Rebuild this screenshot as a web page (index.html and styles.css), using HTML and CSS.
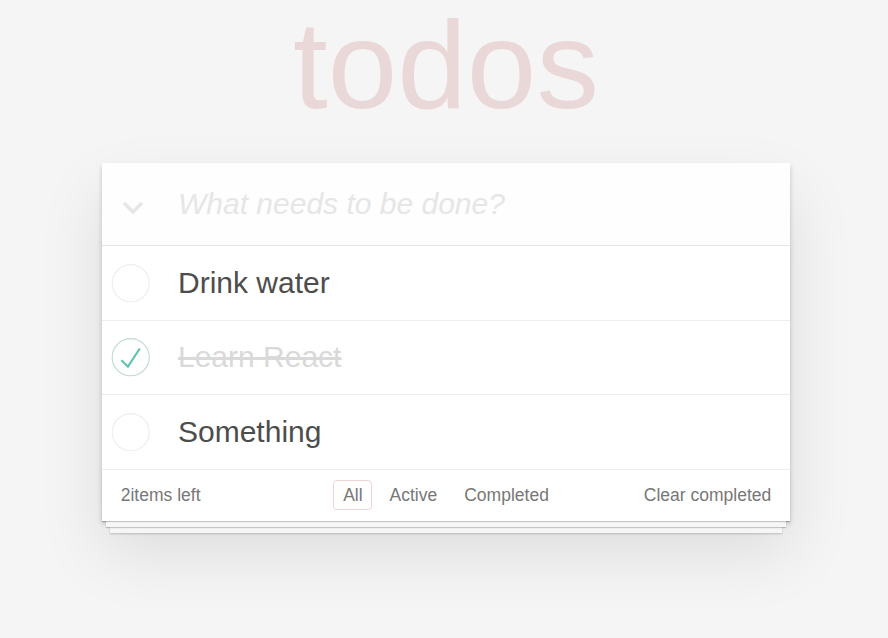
FILE: index.html
```html
<!DOCTYPE html>
<html lang="en">
<head>
<meta charset="utf-8">
<title>todos</title>
<link rel="stylesheet" href="styles.css">
</head>
<body>
<div class="page">
  <section class="todoapp">
    <h1 class="title">todos</h1>
    <div class="card">
      <header class="new-row">
        <span class="toggle-all">
          <svg width="22" height="14" viewBox="0 0 22 14"><path d="M2 2 L11 11 L20 2" fill="none" stroke="#e6e6e6" stroke-width="3.4"/></svg>
        </span>
        <span class="new-todo">What needs to be done?</span>
      </header>
      <ul class="todo-list">
        <li class="todo">
          <svg class="check" width="50" height="50" viewBox="-10 -18 100 135"><circle cx="50" cy="50" r="50" fill="none" stroke="#ededed" stroke-width="3"/></svg>
          <span class="label">Drink water</span>
        </li>
        <li class="todo done">
          <svg class="check" width="50" height="50" viewBox="-10 -18 100 135"><circle cx="50" cy="50" r="50" fill="none" stroke="#bddad5" stroke-width="3"/><path fill="#5dc2af" d="M72 25L42 71 27 56l-4 4 20 20 34-52z"/></svg>
          <span class="label">Learn React</span>
        </li>
        <li class="todo">
          <svg class="check" width="50" height="50" viewBox="-10 -18 100 135"><circle cx="50" cy="50" r="50" fill="none" stroke="#ededed" stroke-width="3"/></svg>
          <span class="label">Something</span>
        </li>
      </ul>
      <footer class="footer">
        <span class="todo-count"><strong>2</strong>items left</span>
        <ul class="filters">
          <li><a class="selected">All</a></li>
          <li><a>Active</a></li>
          <li><a>Completed</a></li>
        </ul>
        <span class="clear">Clear completed</span>
      </footer>
    </div>
  </section>
</div>
</body>
</html>
```

FILE: styles.css
```css
html, body {
  margin: 0;
  padding: 0;
}
body {
  background: #f5f5f5;
  font-family: "Liberation Sans", Arial, Helvetica, sans-serif;
  font-size: 17.5px;
  line-height: 24.5px;
  color: #4d4d4d;
  min-height: 638px;
}
.page {
  padding-left: 4px;
  padding-top: 2px;
}
.todoapp {
  width: 688px;
  margin: 0 auto 50px;
}
.title {
  margin: 0 0 36px;
  font-size: 125px;
  line-height: 125px;
  font-weight: normal;
  text-align: center;
  color: rgba(175, 47, 47, 0.15);
}
.card {
  background: #fff;
  box-shadow: 0 2.5px 5px rgba(0, 0, 0, 0.2), 0 31px 62px 0 rgba(0, 0, 0, 0.1);
}
.new-row {
  display: flex;
  align-items: center;
  height: 82px;
  background: rgba(0, 0, 0, 0.003);
}
.toggle-all {
  width: 22px;
  height: 14px;
  margin-left: 20px;
  margin-top: 8px;
  display: flex;
}
.new-todo {
  margin-left: 34px;
  font-size: 30px;
  font-style: italic;
  line-height: 42px;
  color: #e6e6e6;
}
.todo-list {
  list-style: none;
  margin: 0;
  padding: 0;
  border-top: 1px solid #e6e6e6;
}
.todo {
  display: flex;
  align-items: center;
  border-bottom: 1px solid #ededed;
  height: 74.5px;
  box-sizing: border-box;
}
.check {
  flex: none;
  display: block;
}
.label {
  margin-left: 26px;
  font-size: 30px;
  line-height: 36px;
  color: #4d4d4d;
}
.done .label {
  color: #d9d9d9;
  text-decoration: line-through;
}
.footer {
  display: grid;
  grid-template-columns: 1fr auto 1fr;
  align-items: center;
  height: 51px;
  box-sizing: border-box;
  padding: 0 18.75px;
  color: #777;
  box-shadow: 0 1px 1px rgba(0, 0, 0, 0.2),
    0 10px 0 -4px #f6f6f6,
    0 11px 1px -4px rgba(0, 0, 0, 0.2),
    0 20px 0 -8px #f6f6f6,
    0 21px 2px -8px rgba(0, 0, 0, 0.2);
}
.todo-count strong {
  font-weight: normal;
}
.filters {
  list-style: none;
  margin: 0;
  padding: 0;
  display: flex;
}
.filters a {
  margin: 3.75px;
  padding: 3.75px 8.75px;
  border: 1px solid transparent;
  border-radius: 3.75px;
  color: inherit;
}
.filters a.selected {
  border-color: rgba(175, 47, 47, 0.2);
}
.clear {
  justify-self: end;
}
```
